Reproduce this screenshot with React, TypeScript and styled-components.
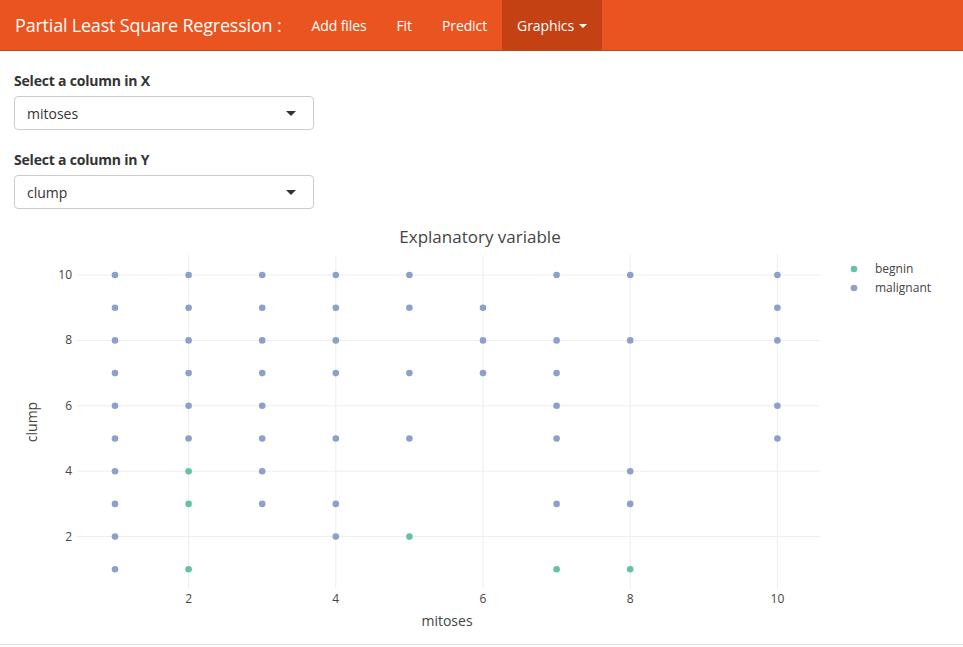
import React from "react";
import styled, { createGlobalStyle } from "styled-components";

const Global = createGlobalStyle`
  html, body { margin: 0; padding: 0; background: #fff; }
  body { font-family: "Open Sans", "Liberation Sans", sans-serif; color: #333; font-size: 14px; }
`;

const NavBar = styled.nav`
  height: 51px;
  background: #e95420;
  border-bottom: 1px solid #c34113;
  box-sizing: border-box;
  display: flex;
  align-items: stretch;
`;

const Brand = styled.div`
  padding: 0 15px;
  display: flex;
  align-items: center;
  color: #fff;
  font-size: 18px;
  letter-spacing: -0.2px;
`;

const NavLink = styled.div<{ $active?: boolean }>`
  padding: 0 15px;
  display: flex;
  align-items: center;
  gap: 5px;
  color: #fff;
  font-size: 14px;
  letter-spacing: -0.1px;
  background: ${(p) => (p.$active ? "#c34113" : "transparent")};
`;

const NavCaret = styled.span`
  display: inline-block;
  width: 0;
  height: 0;
  border-top: 4px solid #fff;
  border-left: 4px solid transparent;
  border-right: 4px solid transparent;
  margin-top: 2px;
`;

const Content = styled.div`
  padding: 20px 14px 0;
  display: flex;
  flex-direction: column;
  gap: 20px;
`;

const FormGroup = styled.div`
  display: flex;
  flex-direction: column;
  gap: 5px;
`;

const Label = styled.label`
  font-weight: 700;
  font-size: 14px;
  line-height: 20px;
  color: #333;
  letter-spacing: -0.2px;
`;

const SelectBox = styled.div`
  width: 300px;
  height: 34px;
  box-sizing: border-box;
  border: 1px solid #ccc;
  border-radius: 4px;
  padding: 0 15px 0 12px;
  display: flex;
  align-items: center;
  justify-content: space-between;
  font-size: 14px;
  color: #333;
  background: #fff;
`;

const SelectCaret = styled.span`
  width: 0;
  height: 0;
  border-top: 5px solid #333;
  border-left: 5px solid transparent;
  border-right: 5px solid transparent;
  margin-right: 2px;
`;

const PlotWrap = styled.div`
  margin-top: 7px;
  height: 429px;
  border-bottom: 1px solid #ddd;
  box-sizing: border-box;
`;

const PlotSvg = styled.svg`
  display: block;
  font-family: "Open Sans", verdana, arial, sans-serif;
`;

const OFFY = 215;
const xs = (v: number) => 115 + (v - 1) * 73.6;
const ys = (v: number) => 274 + (10 - v) * 32.7 - OFFY;

const BEG = "#66c2a5";
const MAL = "#8da0cb";

const malignant: [number, number[]][] = [
  [1, [10, 9, 8, 7, 6, 5, 4, 3, 2, 1]],
  [2, [10, 9, 8, 7, 6, 5]],
  [3, [10, 9, 8, 7, 6, 5, 4, 3]],
  [4, [10, 9, 8, 7, 5, 3, 2]],
  [5, [10, 9, 7, 5]],
  [6, [9, 8, 7]],
  [7, [10, 8, 7, 6, 5, 3]],
  [8, [10, 8, 4, 3]],
  [10, [10, 9, 8, 6, 5]],
];
const begnin: [number, number][] = [
  [2, 4], [2, 3], [2, 1], [5, 2], [7, 1], [8, 1],
];

function Plot() {
  const top = 254 - OFFY;
  const bottom = 588 - OFFY;
  const left = 77;
  const right = 820;
  return (
    <PlotSvg width={963} height={428} viewBox="0 0 963 428">
      {[2, 4, 6, 8, 10].map((v) => (
        <line key={"v" + v} x1={xs(v)} x2={xs(v)} y1={top} y2={bottom} stroke="#eee" strokeWidth={1} />
      ))}
      {[2, 4, 6, 8, 10].map((v) => (
        <line key={"h" + v} x1={left} x2={right} y1={ys(v)} y2={ys(v)} stroke="#eee" strokeWidth={1} />
      ))}
      {[2, 4, 6, 8, 10].map((v) => (
        <text key={"yt" + v} x={72} y={ys(v) + 4} textAnchor="end" fontSize={12} fill="#444">{v}</text>
      ))}
      {[2, 4, 6, 8, 10].map((v) => (
        <text key={"xt" + v} x={xs(v)} y={598 - OFFY + 4} textAnchor="middle" fontSize={12} fill="#444">{v}</text>
      ))}
      {malignant.flatMap(([x, arr]) =>
        arr.map((y) => <circle key={`m${x}-${y}`} cx={xs(x)} cy={ys(y)} r={3.3} fill={MAL} />)
      )}
      {begnin.map(([x, y]) => (
        <circle key={`b${x}-${y}`} cx={xs(x)} cy={ys(y)} r={3.3} fill={BEG} />
      ))}
      <text x={480} y={236 - OFFY + 6} textAnchor="middle" fontSize={17} fill="#444">Explanatory variable</text>
      <text x={447} y={620 - OFFY + 5} textAnchor="middle" fontSize={14} fill="#444">mitoses</text>
      <text transform={`translate(37 ${421 - OFFY}) rotate(-90)`} textAnchor="middle" fontSize={14} fill="#444">clump</text>
      <circle cx={854} cy={268 - OFFY} r={3.3} fill={BEG} />
      <text x={875} y={268 - OFFY + 4} fontSize={12} fill="#444">begnin</text>
      <circle cx={854} cy={287 - OFFY} r={3.3} fill={MAL} />
      <text x={875} y={287 - OFFY + 4} fontSize={12} fill="#444">malignant</text>
    </PlotSvg>
  );
}

export default function App() {
  return (
    <>
      <Global />
      <NavBar>
        <Brand>Partial Least Square Regression :</Brand>
        <NavLink>Add files</NavLink>
        <NavLink>Fit</NavLink>
        <NavLink>Predict</NavLink>
        <NavLink $active>
          Graphics <NavCaret />
        </NavLink>
      </NavBar>
      <Content>
        <FormGroup>
          <Label>Select a column in X</Label>
          <SelectBox>
            <span>mitoses</span>
            <SelectCaret />
          </SelectBox>
        </FormGroup>
        <FormGroup>
          <Label>Select a column in Y</Label>
          <SelectBox>
            <span>clump</span>
            <SelectCaret />
          </SelectBox>
        </FormGroup>
      </Content>
      <PlotWrap>
        <Plot />
      </PlotWrap>
    </>
  );
}
